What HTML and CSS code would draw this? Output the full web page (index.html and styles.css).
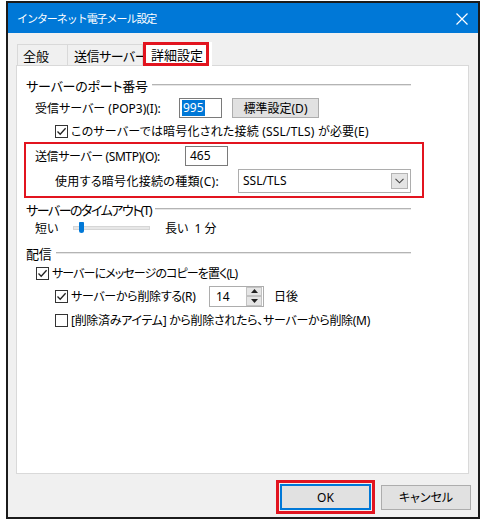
FILE: index.html
```html
<!DOCTYPE html>
<html lang="ja">
<head>
<meta charset="utf-8">
<title>インターネット電子メール設定</title>
<link rel="stylesheet" href="styles.css">
</head>
<body>
<div class="window">
  <div class="titlebar">
    <span class="title">インターネット電子メール設定</span>
    <svg class="close" width="12" height="12" viewBox="0 0 12 12"><path d="M0.5 0.5 L11.5 11.5 M11.5 0.5 L0.5 11.5" stroke="#fff" stroke-width="1.2" fill="none"/></svg>
  </div>
  <div class="body">
    <div class="tabs">
      <div class="tab t1">全般</div>
      <div class="tab t2">送信サーバー</div>
      <div class="tab sel"><span class="redtab">詳細設定</span></div>
    </div>
    <div class="panel">
      <div class="group g1"><span>サーバーのポート番号</span><i class="rule"></i></div>
      <div class="row pop">
        <span class="lbl">受信サーバー (POP3)(I):</span>
        <span class="input in-pop"><span class="hl">995</span></span>
        <span class="btn std">標準設定(D)</span>
      </div>
      <div class="row chk ind2">
        <span class="cb on"><svg width="11" height="11" viewBox="0 0 11 11"><path d="M1.5 5.5 L4.2 8.3 L9.6 2.2" stroke="#222" stroke-width="1.3" fill="none"/></svg></span>
        <span class="t-ssl">このサーバーでは暗号化された接続 (SSL/TLS) が必要(E)</span>
      </div>
      <div class="redbox">
        <div class="row smtp">
          <span class="lbl">送信サーバー (SMTP)(O):</span>
          <span class="input in-smtp">465</span>
        </div>
        <div class="row enc">
          <span class="lbl">使用する暗号化接続の種類(C):</span>
          <span class="select"><span>SSL/TLS</span><span class="dd"><svg width="9" height="6" viewBox="0 0 9 6"><path d="M0.5 0.8 L4.5 4.8 L8.5 0.8" stroke="#444" stroke-width="1.1" fill="none"/></svg></span></span>
        </div>
      </div>
      <div class="group g2"><span>サーバーのタイムアウト(T)</span><i class="rule"></i></div>
      <div class="row slide">
        <span class="lbl">短い</span>
        <span class="track"><span class="thumb"></span></span>
        <span class="long">長い&nbsp; 1 分</span>
      </div>
      <div class="group g3"><span>配信</span><i class="rule"></i></div>
      <div class="row chk ind1">
        <span class="cb on"><svg width="11" height="11" viewBox="0 0 11 11"><path d="M1.5 5.5 L4.2 8.3 L9.6 2.2" stroke="#222" stroke-width="1.3" fill="none"/></svg></span>
        <span class="t-copy">サーバーにメッセージのコピーを置く(L)</span>
      </div>
      <div class="row chk ind2 del">
        <span class="cb on"><svg width="11" height="11" viewBox="0 0 11 11"><path d="M1.5 5.5 L4.2 8.3 L9.6 2.2" stroke="#222" stroke-width="1.3" fill="none"/></svg></span>
        <span class="dlbl">サーバーから削除する(R)</span>
        <span class="spin"><span class="sval">14</span><span class="sbtns"><span class="sb"><svg width="7" height="4" viewBox="0 0 7 4"><path d="M0 4 L3.5 0 L7 4Z" fill="#222"/></svg></span><span class="sb"><svg width="7" height="4" viewBox="0 0 7 4"><path d="M0 0 L3.5 4 L7 0Z" fill="#222"/></svg></span></span></span>
        <span class="days">日後</span>
      </div>
      <div class="row chk ind2">
        <span class="cb"></span>
        <span class="t-del">[削除済みアイテム] から削除されたら、サーバーから削除(M)</span>
      </div>
    </div>
    <div class="buttons">
      <span class="redok"><span class="btn ok">OK</span></span>
      <span class="btn cancel">キャンセル</span>
    </div>
  </div>
</div>
</body>
</html>
```
FILE: styles.css
```css
* { box-sizing: border-box; }
body {
  margin: 0;
  background: #fff;
  font-family: "Noto Sans", "Noto Sans CJK JP", sans-serif;
  font-size: 12px;
  font-feature-settings: "palt" 1;
  color: #000;
  white-space: nowrap;
}
.window {
  margin: 1px 0 0 6px;
  width: 474px;
  height: 518px;
  border: 2px solid #1b1b1b;
  background: #f0f0f0;
  display: flex;
  flex-direction: column;
}
.titlebar {
  height: 30px;
  background: #0078d7;
  color: #fff;
  display: flex;
  align-items: center;
  justify-content: space-between;
  padding: 0 10px 0 9px;
  flex: none;
}
.title { font-size: 11px; letter-spacing: -1.05px; font-feature-settings: normal; }
.close { margin-top: 1px; }
.body { flex: 1; display: flex; flex-direction: column; }
.tabs {
  display: flex;
  margin: 9px 0 0 9px;
  height: 24px;
  align-items: flex-end;
}
.tab {
  height: 22px;
  display: flex;
  align-items: center;
  border: 1px solid #d9d9d9;
  border-bottom: none;
  padding: 0 6px;
  background: #f0f0f0;
  font-size: 13px;
}
.t1 { width: 50px; border-right: none; padding-left: 5px; }
.t2 { width: 76px; padding-left: 6px; letter-spacing: -0.5px; }
.sel {
  height: 24px;
  background: #fff;
  border: none;
  padding: 0;
  width: 69px;
  position: relative;
  z-index: 2;
  align-items: stretch;
}
.redtab {
  border: 3px solid #e2141f;
  width: 66px;
  display: flex;
  align-items: center;
  padding-left: 5px;
}
.panel {
  margin: -1px 0 0 8px;
  width: 453px;
  height: 409px;
  background: #fff;
  border: 1px solid #d9d9d9;
  padding: 0 0 0 9px;
  display: flex;
  flex-direction: column;
}
.group {
  display: flex;
  align-items: center;
  height: 18px;
  width: 385px;
  font-size: 13px;
  letter-spacing: -0.2px;
}
.rule {
  flex: 1;
  margin-left: 4px;
  border-top: 1px solid #b4b4b4;
  border-bottom: 1px solid #e6e6e6;
  height: 2px;
}
.g1 { margin-top: 10px; }
.g2 { margin-top: 2px; letter-spacing: -1.5px; }
.g2 .rule { margin-left: 4px; }
.g3 { margin-top: 6px; }
.row { display: flex; align-items: center; }
.pop { height: 25px; padding-left: 9px; padding-top: 2px; }
.pop .lbl { width: 144px; }
.input {
  background: #fff;
  border: 1px solid #7a7a7a;
  height: 20px;
  display: flex;
  align-items: center;
  padding-left: 2px;
}
.in-pop { width: 43px; }
.hl { background: #0078d7; color: #fff; padding: 0 1px; line-height: 16px; }
.btn {
  display: inline-flex;
  align-items: center;
  justify-content: center;
  background: #e1e1e1;
  border: 1px solid #adadad;
}
.std { margin-left: 10px; width: 87px; height: 20px; }
.chk { height: 24px; }
.ind1 { padding-left: 10px; }
.ind2 { padding-left: 29px; }
.cb {
  width: 13px;
  height: 13px;
  border: 1px solid #333;
  background: #fff;
  margin-right: 3px;
  display: inline-flex;
  align-items: center;
  justify-content: center;
  flex: none;
}
.t-ssl { letter-spacing: 0.2px; }
.t-copy { letter-spacing: -0.9px; }
.t-del { letter-spacing: -0.3px; }
.redbox {
  margin: -1px 0 0 -2px;
  width: 400px;
  height: 56px;
  border: 2px solid #e2141f;
  padding: 0 0 2px 9px;
}
.smtp { height: 23px; }
.smtp .lbl { width: 150px; letter-spacing: -0.4px; }
.in-smtp { width: 43px; padding-left: 4px; }
.enc { height: 27px; padding-left: 20px; }
.enc .lbl { width: 183px; letter-spacing: 0.3px; }
.select {
  width: 173px;
  height: 24px;
  border: 1px solid #adadad;
  background: #fff;
  display: flex;
  align-items: center;
  justify-content: space-between;
  padding: 0 2px 0 4px;
}
.dd {
  width: 17px;
  height: 16px;
  background: #e5e5e5;
  border: 1px solid #b4b4b4;
  display: flex;
  align-items: center;
  justify-content: center;
}
.slide { height: 20px; padding-left: 9px; }
.slide .lbl { width: 38px; }
.track {
  width: 77px;
  height: 4px;
  background: #e7e7e7;
  border: 1px solid #d6d6d6;
  position: relative;
}
.thumb {
  position: absolute;
  left: 5px;
  top: -5px;
  width: 5px;
  height: 11px;
  background: #0078d7;
  border-radius: 1px 1px 3px 3px;
}
.long { margin-left: 15px; }
.ind1.chk { height: 22px; }
.del .dlbl { width: 138px; letter-spacing: -0.3px; }
.spin {
  width: 55px;
  height: 21px;
  border: 1px solid #adadad;
  background: #fff;
  display: flex;
  align-items: center;
  justify-content: space-between;
  padding-left: 6px;
}
.sbtns { display: flex; flex-direction: column; height: 19px; width: 16px; margin-right: 1px; }
.sb {
  flex: 1;
  background: #e5e5e5;
  border: 1px solid #c2c2c2;
  display: flex;
  align-items: center;
  justify-content: center;
}
.days { margin-left: 10px; }
.buttons {
  display: flex;
  justify-content: flex-end;
  align-items: center;
  margin-top: 6px;
  padding-right: 7px;
}
.redok {
  border: 3px solid #e2141f;
  padding: 1px;
  display: flex;
  margin-right: 6px;
}
.ok {
  width: 91px;
  height: 26px;
  border: 2px solid #0078d7;
}
.cancel { width: 90px; height: 25px; }
```
